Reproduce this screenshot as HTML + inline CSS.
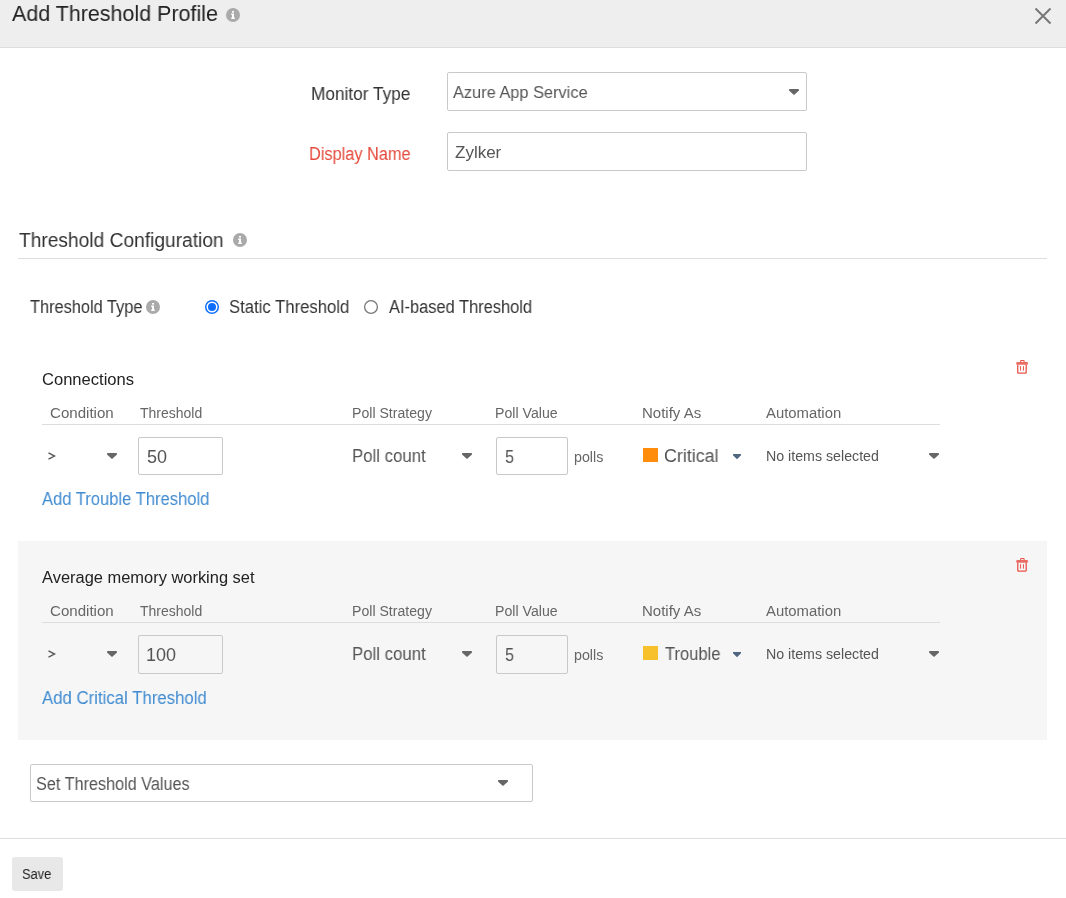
<!DOCTYPE html>
<html><head><meta charset="utf-8"><style>
html,body{margin:0;padding:0;width:1066px;height:898px;overflow:hidden;background:#fff}
body{position:relative;font-family:"Liberation Sans",sans-serif}
.a{position:absolute;display:block}
.t{position:absolute;white-space:nowrap;transform-origin:0 0;will-change:transform}
.box{position:absolute;border:1px solid #c9c9c9;border-radius:2px}
</style></head><body>
<div class="a" style="left:0;top:0;width:1066px;height:47px;background:#eee;border-bottom:1px solid #dddddd"></div>
<svg class="a" style="left:226px;top:8px" width="14" height="14" viewBox="0 0 14 14"><circle cx="7" cy="7" r="7" fill="#aaa"/><rect x="6" y="3" width="2" height="1.6" fill="#fff"/><path d="M5.2 5.6H8V9.6H8.8V11H5.2V9.6H6V7H5.2Z" fill="#fff"/></svg>
<svg class="a" style="left:1034px;top:7px" width="18" height="18" viewBox="0 0 18 18"><path d="M1.5 1.5L16.5 16.5M16.5 1.5L1.5 16.5" stroke="#777" stroke-width="2"/></svg>
<div class="box" style="left:447px;top:72px;width:358px;height:37px"></div>
<svg class="a" style="left:789px;top:89px" width="10" height="6" viewBox="0 0 10 6" preserveAspectRatio="none"><path d="M0 0.4Q0 0 0.4 0H9.6Q10 0 10 0.4V1.5L5.6 5.6Q5 6.1 4.4 5.6L0 1.5Z" fill="#666"/></svg>
<div class="box" style="left:447px;top:132px;width:358px;height:37px"></div>
<div class="a" style="left:18px;top:258px;width:1029px;height:1px;background:#ddd"></div>
<svg class="a" style="left:233px;top:233px" width="14" height="14" viewBox="0 0 14 14"><circle cx="7" cy="7" r="7" fill="#aaa"/><rect x="6" y="3" width="2" height="1.6" fill="#fff"/><path d="M5.2 5.6H8V9.6H8.8V11H5.2V9.6H6V7H5.2Z" fill="#fff"/></svg>
<svg class="a" style="left:146px;top:300px" width="14" height="14" viewBox="0 0 14 14"><circle cx="7" cy="7" r="7" fill="#aaa"/><rect x="6" y="3" width="2" height="1.6" fill="#fff"/><path d="M5.2 5.6H8V9.6H8.8V11H5.2V9.6H6V7H5.2Z" fill="#fff"/></svg>
<svg class="a" style="left:204px;top:299px" width="16" height="16" viewBox="0 0 16 16"><circle cx="8" cy="8" r="6.3" fill="#fff" stroke="#0d6efd" stroke-width="1.5"/><circle cx="8" cy="8" r="4" fill="#0d6efd"/></svg>
<svg class="a" style="left:363px;top:299px" width="16" height="16" viewBox="0 0 16 16"><circle cx="8" cy="8" r="6.4" fill="#fff" stroke="#777" stroke-width="1.3"/></svg>
<div class="a" style="left:18px;top:343px;width:1029px;height:198px;background:#fff"></div>
<svg class="a" style="left:1016px;top:358px" width="13" height="17" viewBox="0 0 13 17"><g fill="none" stroke="#e8544a"><path d="M4.7 4.2V3Q4.7 2.5 5.3 2.5H7.5Q8.1 2.5 8.1 3V4.2" stroke-width="1.1"/><path d="M1.5 5.4H10.8" stroke-width="2.6" stroke-linecap="round" stroke-opacity="0.85"/><path d="M1.75 6.6V14.6Q1.75 15.2 2.5 15.2H9.5Q10.2 15.2 10.2 14.6V6.6" stroke-width="1.3"/><path d="M4.55 8.2V12.6M7.45 8.2V12.6" stroke-width="1"/></g></svg>
<div class="a" style="left:42px;top:424px;width:898px;height:1px;background:#ddd"></div>
<svg class="a" style="left:107px;top:453px" width="10" height="6" viewBox="0 0 10 6" preserveAspectRatio="none"><path d="M0 0.4Q0 0 0.4 0H9.6Q10 0 10 0.4V1.5L5.6 5.6Q5 6.1 4.4 5.6L0 1.5Z" fill="#666"/></svg>
<svg class="a" style="left:44px;top:448px" width="16" height="16" viewBox="0 0 16 16"><path d="M4.5 4.9L10.6 8.1L4.5 11.2" fill="none" stroke="#555" stroke-width="1.3"/></svg>
<div class="box" style="left:138px;top:437px;width:83px;height:36px;background:#fff"></div>
<svg class="a" style="left:462px;top:453px" width="10" height="6" viewBox="0 0 10 6" preserveAspectRatio="none"><path d="M0 0.4Q0 0 0.4 0H9.6Q10 0 10 0.4V1.5L5.6 5.6Q5 6.1 4.4 5.6L0 1.5Z" fill="#666"/></svg>
<div class="box" style="left:496px;top:437px;width:70px;height:36px;background:#fff"></div>
<div class="a" style="left:643px;top:448px;width:15px;height:14px;background:#ff8c0a"></div>
<svg class="a" style="left:733px;top:454px" width="8" height="5" viewBox="0 0 10 6" preserveAspectRatio="none"><path d="M0 0.4Q0 0 0.4 0H9.6Q10 0 10 0.4V1.5L5.6 5.6Q5 6.1 4.4 5.6L0 1.5Z" fill="#4f6580"/></svg>
<svg class="a" style="left:929px;top:453px" width="10" height="6" viewBox="0 0 10 6" preserveAspectRatio="none"><path d="M0 0.4Q0 0 0.4 0H9.6Q10 0 10 0.4V1.5L5.6 5.6Q5 6.1 4.4 5.6L0 1.5Z" fill="#666"/></svg>
<div class="a" style="left:18px;top:541px;width:1029px;height:199px;background:#f6f6f6"></div>
<svg class="a" style="left:1016px;top:556px" width="13" height="17" viewBox="0 0 13 17"><g fill="none" stroke="#e8544a"><path d="M4.7 4.2V3Q4.7 2.5 5.3 2.5H7.5Q8.1 2.5 8.1 3V4.2" stroke-width="1.1"/><path d="M1.5 5.4H10.8" stroke-width="2.6" stroke-linecap="round" stroke-opacity="0.85"/><path d="M1.75 6.6V14.6Q1.75 15.2 2.5 15.2H9.5Q10.2 15.2 10.2 14.6V6.6" stroke-width="1.3"/><path d="M4.55 8.2V12.6M7.45 8.2V12.6" stroke-width="1"/></g></svg>
<div class="a" style="left:42px;top:622px;width:898px;height:1px;background:#ddd"></div>
<svg class="a" style="left:107px;top:651px" width="10" height="6" viewBox="0 0 10 6" preserveAspectRatio="none"><path d="M0 0.4Q0 0 0.4 0H9.6Q10 0 10 0.4V1.5L5.6 5.6Q5 6.1 4.4 5.6L0 1.5Z" fill="#666"/></svg>
<svg class="a" style="left:44px;top:646px" width="16" height="16" viewBox="0 0 16 16"><path d="M4.5 4.9L10.6 8.1L4.5 11.2" fill="none" stroke="#555" stroke-width="1.3"/></svg>
<div class="box" style="left:138px;top:635px;width:83px;height:37px;background:#f6f6f6"></div>
<svg class="a" style="left:462px;top:651px" width="10" height="6" viewBox="0 0 10 6" preserveAspectRatio="none"><path d="M0 0.4Q0 0 0.4 0H9.6Q10 0 10 0.4V1.5L5.6 5.6Q5 6.1 4.4 5.6L0 1.5Z" fill="#666"/></svg>
<div class="box" style="left:496px;top:635px;width:70px;height:37px;background:#f6f6f6"></div>
<div class="a" style="left:643px;top:646px;width:15px;height:14px;background:#f6c12b"></div>
<svg class="a" style="left:733px;top:652px" width="8" height="5" viewBox="0 0 10 6" preserveAspectRatio="none"><path d="M0 0.4Q0 0 0.4 0H9.6Q10 0 10 0.4V1.5L5.6 5.6Q5 6.1 4.4 5.6L0 1.5Z" fill="#4f6580"/></svg>
<svg class="a" style="left:929px;top:651px" width="10" height="6" viewBox="0 0 10 6" preserveAspectRatio="none"><path d="M0 0.4Q0 0 0.4 0H9.6Q10 0 10 0.4V1.5L5.6 5.6Q5 6.1 4.4 5.6L0 1.5Z" fill="#666"/></svg>
<div class="box" style="left:30px;top:764px;width:501px;height:36px"></div>
<svg class="a" style="left:498px;top:780px" width="10" height="6" viewBox="0 0 10 6" preserveAspectRatio="none"><path d="M0 0.4Q0 0 0.4 0H9.6Q10 0 10 0.4V1.5L5.6 5.6Q5 6.1 4.4 5.6L0 1.5Z" fill="#666"/></svg>
<div class="a" style="left:0;top:838px;width:1066px;height:1px;background:#ddd"></div>
<div class="a" style="left:12px;top:857px;width:51px;height:34px;background:#e8e8e8;border-radius:3px"></div>
<div class="t" style="left:12.00px;top:2.50px;font-size:22px;line-height:22px;color:#222;transform:scaleX(0.9750)">Add Threshold Profile</div>
<div class="t" style="left:311.36px;top:84.90px;font-size:18px;line-height:18px;color:#333;transform:scaleX(0.9576)">Monitor Type</div>
<div class="t" style="left:308.94px;top:145.20px;font-size:18px;line-height:18px;color:#e5493a;transform:scaleX(0.9066)">Display Name</div>
<div class="t" style="left:453.00px;top:83.60px;font-size:17px;line-height:17px;color:#555;transform:scaleX(0.9623)">Azure App Service</div>
<div class="t" style="left:455.30px;top:144.10px;font-size:17px;line-height:17px;color:#555;transform:scaleX(0.9978)">Zylker</div>
<div class="t" style="left:18.52px;top:229.80px;font-size:20px;line-height:20px;color:#333;transform:scaleX(0.9587)">Threshold Configuration</div>
<div class="t" style="left:30.27px;top:297.80px;font-size:18px;line-height:18px;color:#333;transform:scaleX(0.9084)">Threshold Type</div>
<div class="t" style="left:229.11px;top:297.50px;font-size:18px;line-height:18px;color:#333;transform:scaleX(0.9266)">Static Threshold</div>
<div class="t" style="left:388.90px;top:297.50px;font-size:18px;line-height:18px;color:#333;transform:scaleX(0.9124)">AI-based Threshold</div>
<div class="t" style="left:42.02px;top:371.50px;font-size:16px;line-height:16px;color:#222;transform:scaleX(1.0348)">Connections</div>
<div class="t" style="left:49.79px;top:406.20px;font-size:14px;line-height:14px;color:#666;transform:scaleX(1.0765)">Condition</div>
<div class="t" style="left:139.55px;top:406.20px;font-size:14px;line-height:14px;color:#666;transform:scaleX(0.9992)">Threshold</div>
<div class="t" style="left:352.49px;top:406.20px;font-size:14px;line-height:14px;color:#666;transform:scaleX(1.0070)">Poll Strategy</div>
<div class="t" style="left:495.19px;top:406.20px;font-size:14px;line-height:14px;color:#666;transform:scaleX(1.0099)">Poll Value</div>
<div class="t" style="left:641.83px;top:406.20px;font-size:14px;line-height:14px;color:#666;transform:scaleX(1.0716)">Notify As</div>
<div class="t" style="left:765.70px;top:406.20px;font-size:14px;line-height:14px;color:#666;transform:scaleX(1.0614)">Automation</div>
<div class="t" style="left:146.65px;top:448.00px;font-size:18px;line-height:18px;color:#555;transform:scaleX(0.9946)">50</div>
<div class="t" style="left:352.10px;top:447.00px;font-size:18px;line-height:18px;color:#555;transform:scaleX(0.9329)">Poll count</div>
<div class="t" style="left:505.32px;top:447.50px;font-size:18px;line-height:18px;color:#555;transform:scaleX(0.9059)">5</div>
<div class="t" style="left:574.24px;top:449.60px;font-size:14px;line-height:14px;color:#666;transform:scaleX(1.0182)">polls</div>
<div class="t" style="left:663.76px;top:446.60px;font-size:18px;line-height:18px;color:#555;transform:scaleX(0.9906)">Critical</div>
<div class="t" style="left:765.59px;top:449.00px;font-size:14px;line-height:14px;color:#555;transform:scaleX(1.0146)">No items selected</div>
<div class="t" style="left:42.20px;top:489.80px;font-size:18px;line-height:18px;color:#3f8bd1;transform:scaleX(0.9206)">Add Trouble Threshold</div>
<div class="t" style="left:42.00px;top:569.50px;font-size:16px;line-height:16px;color:#222;transform:scaleX(1.0273)">Average memory working set</div>
<div class="t" style="left:49.79px;top:604.20px;font-size:14px;line-height:14px;color:#666;transform:scaleX(1.0765)">Condition</div>
<div class="t" style="left:139.55px;top:604.20px;font-size:14px;line-height:14px;color:#666;transform:scaleX(0.9992)">Threshold</div>
<div class="t" style="left:352.49px;top:604.20px;font-size:14px;line-height:14px;color:#666;transform:scaleX(1.0070)">Poll Strategy</div>
<div class="t" style="left:495.19px;top:604.20px;font-size:14px;line-height:14px;color:#666;transform:scaleX(1.0099)">Poll Value</div>
<div class="t" style="left:641.83px;top:604.20px;font-size:14px;line-height:14px;color:#666;transform:scaleX(1.0716)">Notify As</div>
<div class="t" style="left:765.70px;top:604.20px;font-size:14px;line-height:14px;color:#666;transform:scaleX(1.0614)">Automation</div>
<div class="t" style="left:146.15px;top:646.00px;font-size:18px;line-height:18px;color:#555;transform:scaleX(1.0000)">100</div>
<div class="t" style="left:352.10px;top:645.00px;font-size:18px;line-height:18px;color:#555;transform:scaleX(0.9329)">Poll count</div>
<div class="t" style="left:505.32px;top:645.50px;font-size:18px;line-height:18px;color:#555;transform:scaleX(0.9059)">5</div>
<div class="t" style="left:574.24px;top:647.60px;font-size:14px;line-height:14px;color:#666;transform:scaleX(1.0182)">polls</div>
<div class="t" style="left:664.77px;top:644.60px;font-size:18px;line-height:18px;color:#555;transform:scaleX(0.9210)">Trouble</div>
<div class="t" style="left:765.59px;top:647.00px;font-size:14px;line-height:14px;color:#555;transform:scaleX(1.0146)">No items selected</div>
<div class="t" style="left:42.20px;top:688.80px;font-size:18px;line-height:18px;color:#3f8bd1;transform:scaleX(0.9320)">Add Critical Threshold</div>
<div class="t" style="left:35.62px;top:774.70px;font-size:18px;line-height:18px;color:#555;transform:scaleX(0.9012)">Set Threshold Values</div>
<div class="t" style="left:22.21px;top:867.00px;font-size:14px;line-height:14px;color:#222;transform:scaleX(0.9213)">Save</div>
</body></html>
